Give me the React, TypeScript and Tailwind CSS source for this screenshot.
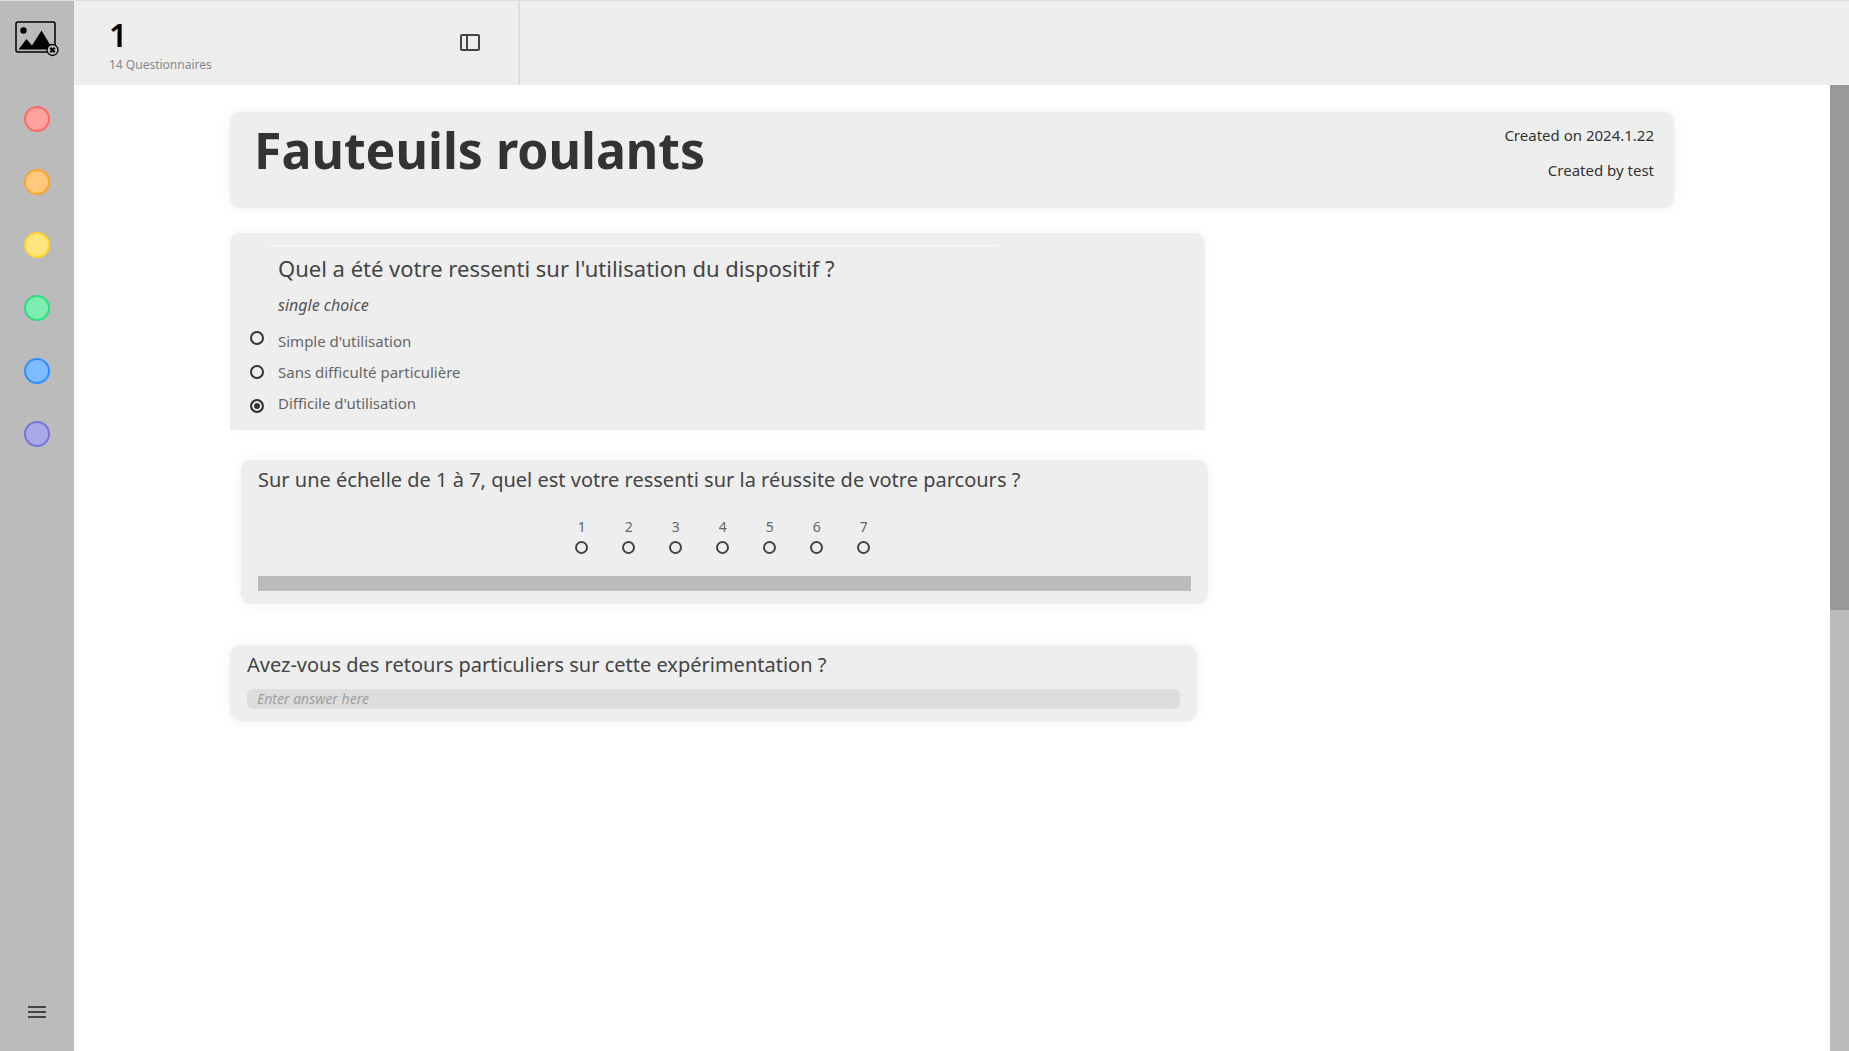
import React from "react";

const colors = [
  { name: "red", className: "bg-[#ffa19c] border-[#ff6961]" },
  { name: "orange", className: "bg-[#ffc87c] border-[#ffa425]" },
  { name: "yellow", className: "bg-[#ffe57e] border-[#ffd52b]" },
  { name: "green", className: "bg-[#7eedb1] border-[#2ade7e]" },
  { name: "blue", className: "bg-[#7ebbff] border-[#2a8fff]" },
  { name: "purple", className: "bg-[#aaa9e8] border-[#7672de]" },
];

const choices = [
  "Simple d'utilisation",
  "Sans difficulté particulière",
  "Difficile d'utilisation",
];

const scale = [1, 2, 3, 4, 5, 6, 7];

const Logo: React.FC = () => (
  <svg width="44" height="36" viewBox="0 0 44 36" fill="none" aria-label="Logo">
    <rect x="1" y="1" width="39" height="30" rx="2" stroke="#000" strokeWidth="1.5" />
    <circle cx="8.500" cy="9.500" r="3.2" fill="#000" />
    <path d="M3.500 28.500 11.500 18 17 24.500 26.500 9.500 38 28.500Z" fill="#000" />
    <circle cx="37.500" cy="29" r="5.500" fill="#bbb" stroke="#000" strokeWidth="1.300" />
    <path d="m35.300 26.800 4.400 4.400m0-4.400-4.400 4.400" stroke="#000" strokeWidth="2.200" />
  </svg>
);

const Sidebar: React.FC = () => (
  <nav className="flex w-[74px] shrink-0 flex-col items-center bg-[#bbb] pt-5 pb-[27px]">
    <Logo />
    <div className="mt-[49px] flex flex-col gap-[37px]">
      {colors.map((color) => (
        <button
          key={color.name}
          aria-label={color.name}
          className={`size-[26px] rounded-full border-2 ${color.className}`}
        />
      ))}
    </div>
    <button aria-label="Menu" className="mt-auto flex h-6 flex-col items-center justify-center gap-[3px]">
      <span className="h-0.5 w-[18px] bg-[#444]" />
      <span className="h-0.5 w-[18px] bg-[#444]" />
      <span className="h-0.5 w-[18px] bg-[#444]" />
    </button>
  </nav>
);

const Header: React.FC = () => (
  <header className="flex h-[84px] shrink-0 bg-[#eee]">
    <div className="flex w-[446px] items-center justify-between border-r-2 border-[#ddd] pr-[37px] pl-[35px]">
      <div className="pt-2">
        <h2 className="text-[32px] leading-9 font-semibold text-black">1</h2>
        <p className="text-xs leading-6 text-[#888]">14 Questionnaires</p>
      </div>
      <button aria-label="Toggle panel">
        <svg width="22" height="20" viewBox="0 0 22 20" fill="none" stroke="#444" strokeWidth="2">
          <rect x="2" y="2" width="18" height="15" rx="1" />
          <path d="M8 2v15" />
        </svg>
      </button>
    </div>
  </header>
);

const radioClass =
  "size-[14px] appearance-none rounded-full border-2 border-[#333] checked:bg-[#333] checked:shadow-[inset_0_0_0_2px_#eee]";

export default function App() {
  return (
    <div className="flex h-screen border-t border-[#ddd] bg-white font-['Noto_Sans',sans-serif] text-[#333]">
      <Sidebar />
      <div className="flex min-w-0 flex-1 flex-col">
        <Header />
        <div className="flex min-h-0 flex-1">
          <main className="flex min-w-0 flex-1 flex-col items-start overflow-hidden px-[156px] pt-[27px]">
            <section className="flex h-24 w-full justify-between rounded-[10px] bg-[#eee] px-5 pt-1.5 shadow-[0_0_12px_rgba(0,0,0,0.06)]">
              <h1 className="pl-1 text-[50px] leading-[64px] font-bold">Fauteuils roulants</h1>
              <div className="text-right text-[15px] leading-[35px]">
                <p>Created on 2024.1.22</p>
                <p>Created by test</p>
              </div>
            </section>

            <fieldset className="mt-[25px] h-[197px] w-[67.5%] rounded-t-[10px] rounded-b-none bg-[#eee] px-5 pt-3 shadow-[0_-2px_10px_rgba(0,0,0,0.04)]">
              <hr className="ml-5 w-[78%] border-[#fafafa]" />
              <h2 className="mt-1 pl-7 text-[22px] leading-9 text-[#444]">
                Quel a été votre ressenti sur l'utilisation du dispositif ?
              </h2>
              <p className="mt-[3px] pl-7 text-base leading-8 text-[#555] italic">single choice</p>
              <div className="flex items-start gap-2">
                <div className="flex flex-col gap-5 pt-[10px]">
                  {choices.map((choice, i) => (
                    <div key={choice} className="flex items-center gap-[5px]">
                      <input
                        id={`choice-${i}`}
                        type="radio"
                        name="feeling"
                        defaultChecked={i === 2}
                        className={radioClass}
                      />
                      <span className="h-3 w-px bg-[#f2e8a8]" />
                    </div>
                  ))}
                </div>
                <div className="flex flex-col pt-[5px] text-[15px] leading-[31px] text-[#666]">
                  {choices.map((choice, i) => (
                    <label key={choice} htmlFor={`choice-${i}`}>
                      {choice}
                    </label>
                  ))}
                </div>
              </div>
            </fieldset>

            <fieldset className="mt-[30px] ml-[11px] w-[67%] rounded-[10px] bg-[#eee] px-[17px] pt-1 pb-[13px] shadow-[0_0_12px_rgba(0,0,0,0.06)]">
              <h2 className="text-xl leading-8 text-[#444]">
                Sur une échelle de 1 à 7, quel est votre ressenti sur la réussite de votre parcours ?
              </h2>
              <div className="mt-[21px] flex justify-center gap-[33px] pr-1">
                {scale.map((n) => (
                  <label key={n} className="flex w-[14px] flex-col items-center text-sm leading-5 text-[#666]">
                    {n}
                    <input
                      type="radio"
                      name="scale"
                      className="mt-1 size-[13px] appearance-none rounded-full border-2 border-[#444]"
                    />
                  </label>
                ))}
              </div>
              <div className="mt-[22px] h-[15px] bg-[#bbb]" />
            </fieldset>

            <section className="mt-[41px] w-[67%] rounded-[10px] bg-[#eee] px-[17px] pt-1 pb-3 shadow-[0_0_12px_rgba(0,0,0,0.06)]">
              <label htmlFor="answer" className="block text-xl leading-8 text-[#444]">
                Avez-vous des retours particuliers sur cette expérimentation ?
              </label>
              <input
                id="answer"
                placeholder="Enter answer here"
                className="mt-2 block h-5 w-full rounded-md bg-[#ddd] px-[10px] text-sm italic placeholder:text-[#a0a0a0]"
              />
            </section>
          </main>
          <div className="w-[19px] shrink-0 bg-[#bbb]">
            <div className="h-[54.3%] bg-[#999]" />
          </div>
        </div>
      </div>
    </div>
  );
}
